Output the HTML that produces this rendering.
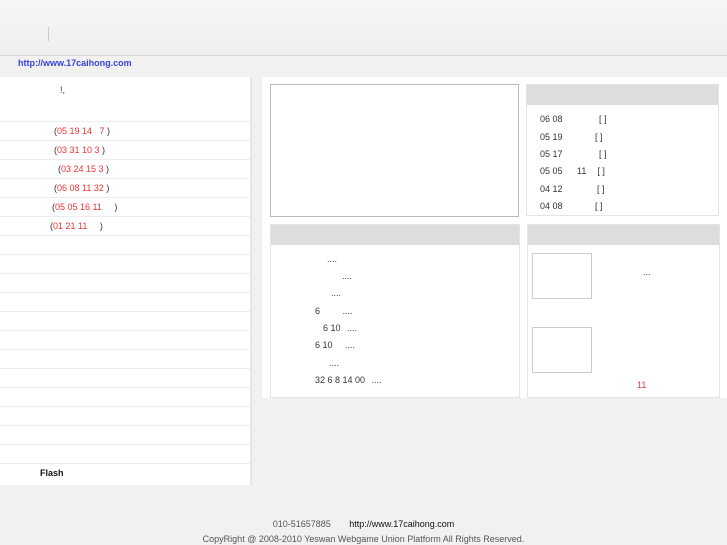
<!DOCTYPE html>
<html><head><meta charset="utf-8"><style>
*{margin:0;padding:0;box-sizing:border-box}
body{width:727px;height:545px;background:#f3f1f0;font-family:"Liberation Sans","Noto Sans CJK SC",sans-serif;font-size:9px;color:#333;position:relative;overflow:hidden}
.abs{position:absolute}
.hdr{left:0;top:0;width:727px;height:56px;background:linear-gradient(#f7f7f7,#eeeeee);border-bottom:1px solid #d8d8d8}
.link{left:18px;top:58px;color:#3344dd;font-weight:bold;font-size:9px}
.left{left:0;top:77px;width:252px;height:408px;background:#fff;border-right:2px solid #e6e6e6}
.row{position:absolute;left:0;width:250px;border-top:1px solid #ececec;height:19px;line-height:18px}
.r{color:#e33}
.right{left:262px;top:77px;width:465px;height:321px;background:#fff}
.box{position:absolute;border:1px solid #ccc;background:#fff}
.bh{height:20px;background:#ddd}
.nl{position:absolute;left:13px;font-size:9px}
.ft{width:727px;text-align:center;color:#555;font-size:9px}
</style></head><body>
<div class="abs hdr"><div class="abs" style="left:48px;top:27px;width:1px;height:14px;background:#ccc"></div></div>
<div class="abs link">http://www.17caihong.com</div>
<div class="abs left">
<div class="abs" style="left:60px;top:8px">!,</div>
<div class="row" style="top:44px"><span style="position:absolute;left:54px">(<span class="r">05 19 14 &nbsp; 7 </span>)</span></div>
<div class="row" style="top:63px"><span style="position:absolute;left:54px">(<span class="r">03 31 10 3 </span>)</span></div>
<div class="row" style="top:82px"><span style="position:absolute;left:58px">(<span class="r">03 24 15 3 </span>)</span></div>
<div class="row" style="top:101px"><span style="position:absolute;left:54px">(<span class="r">06 08 11 32 </span>)</span></div>
<div class="row" style="top:120px"><span style="position:absolute;left:52px">(<span class="r">05 05 16 11 </span>&nbsp;&nbsp;&nbsp;&nbsp;)</span></div>
<div class="row" style="top:139px"><span style="position:absolute;left:50px">(<span class="r">01 21 11 </span>&nbsp;&nbsp;&nbsp;&nbsp;)</span></div>
<div class="row" style="top:158px"></div><div class="row" style="top:177px"></div>
<div class="row" style="top:196px"></div><div class="row" style="top:215px"></div>
<div class="row" style="top:234px"></div><div class="row" style="top:253px"></div>
<div class="row" style="top:272px"></div><div class="row" style="top:291px"></div>
<div class="row" style="top:310px"></div><div class="row" style="top:329px"></div>
<div class="row" style="top:348px"></div><div class="row" style="top:367px"></div>
<div class="row" style="top:386px;height:22px"><b style="position:absolute;left:40px;top:0;color:#111">Flash</b></div>
</div>
<div class="abs right">
<div class="box" style="left:8px;top:7px;width:249px;height:133px;border-color:#bbb"></div>
<div class="box" style="left:264px;top:7px;width:193px;height:132px;border-color:#e4e4e4"><div class="bh"></div>
<div class="nl" style="top:29px">06 08 <span style="margin-left:34px">[ ]</span></div>
<div class="nl" style="top:47px">05 19 <span style="margin-left:30px">[ ]</span></div>
<div class="nl" style="top:64px">05 17 <span style="margin-left:34px">[ ]</span></div>
<div class="nl" style="top:81px">05 05 <span style="margin-left:12px">11</span><span style="margin-left:11px">[ ]</span></div>
<div class="nl" style="top:99px">04 12 <span style="margin-left:32px">[ ]</span></div>
<div class="nl" style="top:116px">04 08 <span style="margin-left:30px">[ ]</span></div>
</div>
<div class="box" style="left:8px;top:147px;width:250px;height:174px;border-color:#e4e4e4"><div class="bh"></div>
<div class="nl" style="left:56px;top:29px">....</div>
<div class="nl" style="left:71px;top:46px">....</div>
<div class="nl" style="left:60px;top:63px">....</div>
<div class="nl" style="left:44px;top:81px">6 <span style="margin-left:20px">....</span></div>
<div class="nl" style="left:52px;top:98px">6 10 <span style="margin-left:4px">....</span></div>
<div class="nl" style="left:44px;top:115px">6 10 <span style="margin-left:10px">....</span></div>
<div class="nl" style="left:58px;top:133px">....</div>
<div class="nl" style="left:44px;top:150px">32 6 8 14 00 <span style="margin-left:4px">....</span></div>
</div>
<div class="box" style="left:265px;top:147px;width:193px;height:174px;border-color:#e4e4e4"><div class="bh"></div>
<div class="abs" style="left:4px;top:28px;width:60px;height:46px;border:1px solid #ccc"></div>
<div class="abs" style="left:4px;top:102px;width:60px;height:46px;border:1px solid #ccc"></div>
<div class="abs" style="left:115px;top:42px">...</div>
<div class="abs r" style="left:109px;top:155px">11</div>
</div>
</div>
<div class="abs ft" style="top:519px">010-51657885 <span style="margin-left:16px;color:#111">http://www.17caihong.com</span></div>
<div class="abs ft" style="top:534px">CopyRight @ 2008-2010 Yeswan Webgame Union Platform All Rights Reserved.</div>
</body></html>
